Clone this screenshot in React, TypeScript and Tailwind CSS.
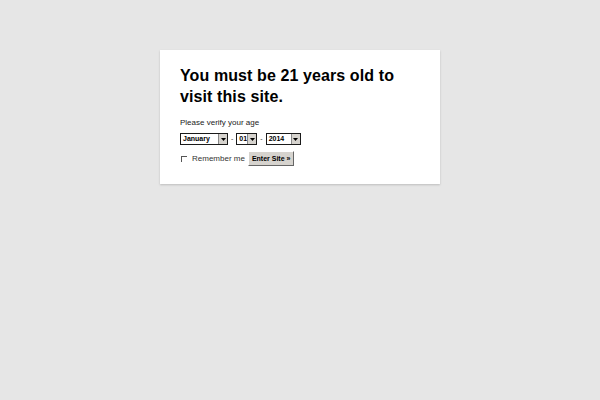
import React from "react";

function FakeSelect({ value, width }: { value: string; width: string }) {
  return (
    <div className={`${width} h-[12px] flex items-stretch border border-[#1a1a1a] bg-white`}>
      <span className="flex-1 pl-[2px] text-[7px] leading-[10px] font-bold text-black">{value}</span>
      <span className="w-[9px] flex items-center justify-center bg-[#d6d3ce] border-l border-[#888]">
        <svg width="5" height="3" viewBox="0 0 5 3">
          <path d="M0 0h5L2.5 3z" fill="#000" />
        </svg>
      </span>
    </div>
  );
}

export default function App() {
  return (
    <div className="min-h-[400px] w-full bg-[#e6e6e6] pt-[50px] font-['Liberation_Sans',Arial,sans-serif]">
      <div className="mx-auto w-[280px] h-[134px] bg-white shadow-[0_1px_2px_rgba(0,0,0,0.18)] px-[20px] pt-[15px]">
        <h1 className="text-[16px] leading-[21px] font-bold text-black tracking-[0.1px]">
          You must be 21 years old to visit this site.
        </h1>
        <p className="mt-[10px] text-[8px] leading-[11px] text-[#222]">Please verify your age</p>
        <div className="mt-[5px] flex items-center gap-[3px] text-[7px] text-[#333]">
          <FakeSelect value="January" width="w-[48px]" />
          <span>-</span>
          <FakeSelect value="01" width="w-[21px]" />
          <span>-</span>
          <FakeSelect value="2014" width="w-[35px]" />
        </div>
        <div className="mt-[6px] flex items-center">
          <span className="ml-[1px] w-[6px] h-[6px] border-t border-l border-[#555]" />
          <span className="ml-[5px] text-[8px] text-[#333]">Remember me</span>
          <button className="ml-[3px] h-[15px] px-[3px] bg-[#d6d3ce] border border-t-white border-l-white border-r-[#666] border-b-[#666] text-[7px] font-bold text-black leading-none">
            Enter Site »
          </button>
        </div>
      </div>
    </div>
  );
}
